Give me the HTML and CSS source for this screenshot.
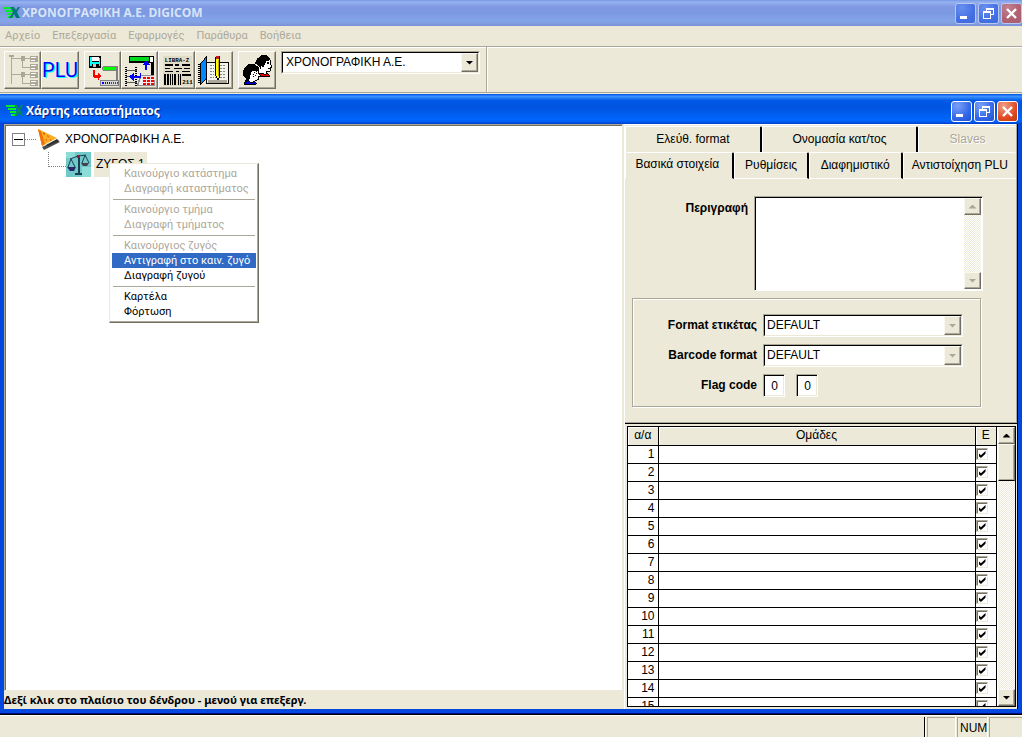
FILE: index.html
```html
<!DOCTYPE html>
<html lang="el">
<head>
<meta charset="utf-8">
<title>ΧΡΟΝΟΓΡΑΦΙΚΗ Α.Ε. DIGICOM</title>
<link rel="stylesheet" href="styles.css">
</head>
<body>
<header class="titlebar titlebar-app">
  <svg class="logo" viewBox="0 0 17 14"><path d="M0 1h9v2H0zM2 4h8v2H2zM4 7h6v2H4zM5 10h6v2H5z" fill="#00f020"/><path d="M7 1h4l2 3 2-3h2l-3 5 3 6h-4l-2-4-2 4H6l4-6z" fill="#007878"/></svg>
  <h1 class="title">ΧΡΟΝΟΓΡΑΦΙΚΗ Α.Ε. DIGICOM</h1>
  <div class="caption">
    <button class="cap" aria-label="Minimize"><svg viewBox="0 0 19 19"><path d="M4 12h7v3H4z" fill="#fff"/></svg></button>
    <button class="cap" aria-label="Restore"><svg viewBox="0 0 19 19" shape-rendering="crispEdges"><path d="M7 4h8v2H7zM7 4h1v3H7zM14 4h1v7h-1zM12 10h3v1h-3zM4 7h8v2H4zM4 7h1v8H4zM11 7h1v8h-1zM4 14h8v1H4z" fill="#fff"/></svg></button>
    <button class="cap cap-close" aria-label="Close"><svg viewBox="0 0 19 19"><path d="M5 5l9 9M14 5l-9 9" stroke="#fff" stroke-width="2.400"/></svg></button>
  </div>
</header>
<nav class="menubar">
  <button>Αρχείο</button><button>Επεξεργασία</button><button>Εφαρμογές</button><button>Παράθυρα</button><button>Βοήθεια</button>
</nav>
<div class="toolbar">
  <div class="toolband">
    <div class="toolgroup">
      <button class="tool" aria-label="Χάρτης"><svg viewBox="0 0 36 36" shape-rendering="crispEdges"><path d="M4 3h5v2H4zM16 4h5v5h-5zM16 20h5v5h-5z" fill="#aca899"/><path d="M6.500 5v27M6 6.500h10M6 22.500h10M18.500 9v7M21 6.500h6M18 15.500h9M18.500 25v7M21 22.500h6M18 31.500h9" stroke="#aca899" fill="none"/><path d="M26 4h8v6h-8zM26 12h8v6h-8zM26 20h8v6h-8zM26 28h8v6h-8z" fill="#aca899"/><path d="M27 5h5v1h-5zM27 13h5v1h-5zM27 21h5v1h-5zM27 29h5v1h-5zM27 8h4v1h-4zM27 16h4v1h-4zM27 24h4v1h-4zM27 32h4v1h-4z" fill="#fff"/></svg></button>
      <button class="tool tool-plu">PLU</button>
    </div>
    <div class="toolgroup">
      <button class="tool" aria-label="Αποστολή"><svg viewBox="0 0 36 36" shape-rendering="crispEdges"><path d="M4 4h12v12H5l-1-1z" fill="#000"/><path d="M5 5h2v9H5zM14 6h1v8h-1z" fill="#0ff"/><path d="M7 5h7v4H7z" fill="#fff"/><path d="M5 10h10v2H5z" fill="#0ff"/><path d="M8 12h5v3H8z" fill="#c0c0c0"/><path d="M11 12h2v3h-2z" fill="#000"/><path d="M8 18h2v5h3v-3l4 4-4 5v-3h-3l-2-2z" fill="#f00"/><path d="M18.500 14.500h14v4h-14z" fill="#0f0" stroke="#808080"/><path d="M32 14h2v14h-2zM15 28h20v6H15z" fill="#808080"/><path d="M16 29h18v4H16z" fill="#d8d8d8"/><path d="M17 31h9" stroke="#00f" stroke-width="2" stroke-dasharray="1 1"/><path d="M27 31h7" stroke="#f00" stroke-width="2" stroke-dasharray="1 1"/></svg></button>
      <button class="tool" aria-label="Λήψη"><svg viewBox="0 0 36 36" shape-rendering="crispEdges"><path d="M7 4h26v20h-3V11H8l-1-2z" fill="#000"/><path d="M8 5h20v4H8z" fill="#00d820"/><path d="M29 5h3v5h-3z" fill="#fff"/><path d="M19 23h14l1 11H15z" fill="#909090"/><path d="M20 24h13v9H17z" fill="#eee"/><path d="M22 25h3v2h-3zM26 25h3v2h-3zM30 25h3v2h-3zM22 28h3v2h-3zM26 28h3v2h-3zM30 28h3v2h-3zM22 31h3v2h-3zM26 31h3v2h-3zM30 31h3v2h-3z" fill="#f00"/><path d="M4.500 15v19M14.500 15v19" stroke="#000" stroke-width="2" stroke-dasharray="1 1"/><path d="M4 18.500h11M4 24.500h11M4 30.500h11" stroke="#555"/><path d="M7 25l5-4v3h6v-3h2v5h-8v3zM24 18v-5h-3l4-5 4 5h-3v5z" fill="#00f"/></svg></button>
      <button class="tool" aria-label="LIBRA-Z 211"><svg viewBox="0 0 36 36" shape-rendering="crispEdges"><path d="M4 4h30v30H4z" fill="#e0dcc8"/><text class="tiny" x="6" y="10">LIBRA-Z</text><path d="M6 12h8v2H6zM16 12h5v2h-5zM24 12h8v2h-8zM6 16h5v1H6zM15 16h9v1h-9zM26 16h6v1h-6zM6 19h8v1H6zM17 19h4v1h-4zM24 19h8v1h-8z" fill="#000"/><path d="M5 22h2v11H5zM8 22h2v11H8zM11 22h1v11h-1zM13 22h1v11h-1zM15 22h2v11h-2zM18 22h1v11h-1zM20 22h1v11h-1zM22 22h1v11h-1zM24 22h9v2h-9z" fill="#000"/><text class="tiny" x="24" y="32">211</text></svg></button>
      <button class="tool" aria-label="Σημειώσεις"><svg viewBox="0 0 36 36" shape-rendering="crispEdges"><path d="M11 10h10l1 2 1-2h10v22H11z" fill="#f4f4ec" stroke="#000"/><path d="M14 13.500h7M25 13.500h6M14 16.500h7M25 16.500h6M14 19.500h7M25 19.500h6M14 22.500h7M25 22.500h6M14 25.500h7M25 25.500h6" stroke="#808080" stroke-dasharray="2 1"/><path d="M12 28h20v3H12z" fill="#aca899"/><path d="M5 11l6-7v22l-6 7z" fill="#08f" stroke="#000"/><path d="M4 12v20" stroke="#000" stroke-width="3" stroke-dasharray="1 1"/><path d="M20.500 4.500h4v20l-2 4-2-4z" fill="#ff0" stroke="#000"/><path d="M21 4h3v3h-3z" fill="#c02020"/><path d="M23.500 8v16" stroke="#c0a800"/></svg></button>
    </div>
    <button class="tool" aria-label="Χρήστες"><svg viewBox="0 0 36 36" shape-rendering="crispEdges"><path d="M23 9l3-4h4l2 3v4l2 3-2 1v3l-4 1v3h-9v-8z" fill="#fff" stroke="#000"/><path d="M16 11l3-5 4-3h6l3 3v2l-4 1-2 4-1 3-2-2-1 3-2-4z" fill="#000"/><path d="M29 10h2v2h-2zM30 16h2v1h-2z" fill="#000"/><path d="M20 22l5-1 2 2 2-2 3 3-1 1H19z" fill="#e00000" stroke="#000"/><path d="M11 19h9v2l2 3-2 1v3l-4 1v2h-6z" fill="#fff" stroke="#000"/><path d="M15 19h1M17 20h1M15 21h1M17 22h1M14 23h1M16 24h1M14 25h1" stroke="#000"/><path d="M6 15l4-3h6l4 3 1 4h-5l-2-1-2 4-1 5-1 3H6l1-3-3-4v-4z" fill="#000"/><path d="M6 30l4-1 2 2 4-1 2 2-2 1H6z" fill="#00c" stroke="#000"/></svg></button>
    <div class="combo combo-store">
      <select aria-label="Κατάστημα"><option>ΧΡΟΝΟΓΡΑΦΙΚΗ Α.Ε.</option></select><span class="arrowbox"><i class="down"></i></span>
    </div>
  </div>
</div>

<main class="child">
  <header class="titlebar titlebar-child">
    <svg class="logo" viewBox="0 0 17 14"><path d="M0 1h9v2H0zM2 4h8v2H2zM4 7h6v2H4zM5 10h6v2H5z" fill="#00f020"/><path d="M9 1h2l2 4 2-4h2l-3 5 3 6h-2l-2-4-2 4H9l2-6z" fill="#009048"/></svg>
    <h2 class="title">Χάρτης καταστήματος</h2>
    <div class="caption">
      <button class="cap" aria-label="Minimize"><svg viewBox="0 0 19 19"><path d="M4 12h7v3H4z" fill="#fff"/></svg></button>
      <button class="cap" aria-label="Restore"><svg viewBox="0 0 19 19" shape-rendering="crispEdges"><path d="M7 4h8v2H7zM7 4h1v3H7zM14 4h1v7h-1zM12 10h3v1h-3zM4 7h8v2H4zM4 7h1v8H4zM11 7h1v8h-1zM4 14h8v1H4z" fill="#fff"/></svg></button>
      <button class="cap cap-close" aria-label="Close"><svg viewBox="0 0 19 19"><path d="M5 5l9 9M14 5l-9 9" stroke="#fff" stroke-width="2.400"/></svg></button>
    </div>
  </header>
  <div class="content">
    <section class="left">
      <div class="tree">
        <div class="node">
          <button class="expander" aria-label="Σύμπτυξη"></button><span class="dots"></span>
          <svg class="cone" viewBox="0 0 24 24"><path d="M5 19l15-7 3 2-16 8z" fill="#000" opacity=".7"/><path d="M1 1l19 9-15 8z" fill="#f8b020"/><path d="M1 1l4 17 3-2-4-13z" fill="#f07010"/><path d="M6 4l2 1v2l-2-1zM10 7l2 1-1 2zM8 12l2-1v2zM13 11l2 1-2 1z" fill="#e06010"/><path d="M9 17l11-6 2 2-11 5z" fill="#303030"/></svg>
          <span class="label">ΧΡΟΝΟΓΡΑΦΙΚΗ Α.Ε.</span>
        </div>
        <div class="node node-child">
          <span class="elbow"></span>
          <svg class="scale" viewBox="0 0 25 25"><path d="M0 0h25v25H0z" fill="#70c8c8"/><path d="M0 0h9v6H0zM16 15h9v10h-9z" fill="#8cdcd8"/><path d="M4 7l8-3 8-1M5 7l-3 8M5 7l4 8M19 3l-3 8M19 3l4 8" stroke="#184050" fill="none"/><path d="M12 3h2v19h-2zM9 21h7v2H9z" fill="#184050"/><path d="M1 15h9l-2 4H4z" fill="#282868"/><path d="M15 11h8l-2 3h-4z" fill="#484050"/><path d="M11 3h3v3h-3z" fill="#902038"/></svg>
          <span class="label label-selected">ΖΥΓΟΣ 1</span>
        </div>
        <div class="menu" role="menu">
          <button role="menuitem" disabled>Καινούργιο κατάστημα</button>
          <button role="menuitem" disabled>Διαγραφή καταστήματος</button>
          <hr>
          <button role="menuitem" disabled>Καινούργιο τμήμα</button>
          <button role="menuitem" disabled>Διαγραφή τμήματος</button>
          <hr>
          <button role="menuitem" disabled>Καινούργιος ζυγός</button>
          <button role="menuitem" class="active">Αντιγραφή στο καιν. ζυγό</button>
          <button role="menuitem">Διαγραφή ζυγού</button>
          <hr>
          <button role="menuitem">Καρτέλα</button>
          <button role="menuitem">Φόρτωση</button>
        </div>
      </div>
      <p class="hint">Δεξί κλικ στο πλαίσιο του δένδρου - μενού για επεξεργ.</p>
    </section>

    <section class="right">
      <div class="panel">
        <div class="tabs tabs-back" role="tablist">
          <button role="tab">Ελεύθ. format</button><button role="tab">Ονομασία κατ/τος</button><button role="tab" disabled>Slaves</button>
        </div>
        <div class="tabs tabs-front" role="tablist">
          <button role="tab" class="current">Βασικά στοιχεία</button><button role="tab">Ρυθμίσεις</button><button role="tab">Διαφημιστικό</button><button role="tab">Αντιστοίχηση PLU</button>
        </div>
        <form class="form">
          <div class="desc">
            <label for="desc">Περιγραφή</label>
            <div class="memo">
              <textarea id="desc"></textarea>
              <div class="scroll"><button type="button" aria-label="Πάνω"><i class="up dim"></i></button><span class="track"></span><button type="button" aria-label="Κάτω"><i class="down dim"></i></button></div>
            </div>
          </div>
          <div class="group">
            <label for="f1">Format ετικέτας</label>
            <div class="combo"><select id="f1"><option>DEFAULT</option></select><span class="arrowbox"><i class="down dim"></i></span></div>
            <label for="f2">Barcode format</label>
            <div class="combo"><select id="f2"><option>DEFAULT</option></select><span class="arrowbox"><i class="down dim"></i></span></div>
            <label for="f3">Flag code</label>
            <div class="flags"><input id="f3" value="0"><input aria-label="Flag code 2" value="0"></div>
          </div>
        </form>
      </div>
      <div class="gridbox">
        <div class="rows">
          <table>
            <thead><tr><th class="num">α/α</th><th>Ομάδες</th><th class="chk">E</th></tr></thead>
            <tbody>
              <tr><td>1</td><td></td><td><input type="checkbox" checked aria-label="1"></td></tr>
              <tr><td>2</td><td></td><td><input type="checkbox" checked aria-label="2"></td></tr>
              <tr><td>3</td><td></td><td><input type="checkbox" checked aria-label="3"></td></tr>
              <tr><td>4</td><td></td><td><input type="checkbox" checked aria-label="4"></td></tr>
              <tr><td>5</td><td></td><td><input type="checkbox" checked aria-label="5"></td></tr>
              <tr><td>6</td><td></td><td><input type="checkbox" checked aria-label="6"></td></tr>
              <tr><td>7</td><td></td><td><input type="checkbox" checked aria-label="7"></td></tr>
              <tr><td>8</td><td></td><td><input type="checkbox" checked aria-label="8"></td></tr>
              <tr><td>9</td><td></td><td><input type="checkbox" checked aria-label="9"></td></tr>
              <tr><td>10</td><td></td><td><input type="checkbox" checked aria-label="10"></td></tr>
              <tr><td>11</td><td></td><td><input type="checkbox" checked aria-label="11"></td></tr>
              <tr><td>12</td><td></td><td><input type="checkbox" checked aria-label="12"></td></tr>
              <tr><td>13</td><td></td><td><input type="checkbox" checked aria-label="13"></td></tr>
              <tr><td>14</td><td></td><td><input type="checkbox" checked aria-label="14"></td></tr>
              <tr><td>15</td><td></td><td><input type="checkbox" checked aria-label="15"></td></tr>
            </tbody>
          </table>
        </div>
        <div class="scroll"><button aria-label="Πάνω"><i class="up"></i></button><span class="thumb"></span><span class="track"></span><button aria-label="Κάτω"><i class="down"></i></button></div>
      </div>
    </section>
  </div>
</main>
<footer class="status"><span class="cell cell-main"></span><span class="cell"></span><span class="cell">NUM</span><span class="cell"></span></footer>
</body>
</html>
```
FILE: styles.css
```css
:root {
  --face: #ece9d8;
  --shade: #aca899;
  --dark: #716f64;
  --ui: "Liberation Sans", Arial, sans-serif;
  --menu: Roboto, Tahoma, sans-serif;
}
* { box-sizing: border-box; }
body {
  margin: 0;
  height: 100vh;
  display: flex;
  flex-direction: column;
  background: var(--face);
  font: 12px/15px var(--ui);
  color: #000;
  overflow: hidden;
}
button, select, input, textarea { font: inherit; color: inherit; margin: 0; padding: 0; border: 0; border-radius: 0; }
h1, h2, p { margin: 0; }

.titlebar { display: flex; align-items: center; flex: none; }
.titlebar-app {
  height: 26px;
  padding-left: 3px;
  color: #d8e4f8;
  background: linear-gradient(#7697e7, #96b2ee 8%, #809ae3 25%, #7b99e1 50%, #85a5e9 80%, #829edf 90%, #7a8fd4);
}
.titlebar-child {
  height: 30px;
  padding: 4px 0 0 2px;
  color: #fff;
  background: linear-gradient(#0050e8, #3c93ff 8%, #0058e6 22%, #0054e0 45%, #0066fc 85%, #005cf2 93%, #003cc8);
}
.logo { width: 17px; height: 14px; flex: none; }
.title { flex: 1; font: bold 12px/18px "Open Sans", "Trebuchet MS", sans-serif; padding-left: 2px; }
.titlebar-child .title { padding-left: 3px; text-shadow: 1px 1px #0a1883; }
.caption { display: flex; gap: 2px; }
.cap {
  width: 21px; height: 21px;
  border: 1px solid #fff;
  border-radius: 3px;
  background: radial-gradient(circle at 30% 20%, #7aa0f8, #3468e8 60%, #2050d0);
}
.cap svg { display: block; width: 19px; height: 19px; }
.cap-close { background: radial-gradient(circle at 30% 20%, #f0a088, #e04c24 60%, #c03810); }
.titlebar-app .cap { border-color: #b8c8f0; background: radial-gradient(circle at 30% 20%, #6890f0, #4470e4 60%, #4068d8); }
.titlebar-app .cap-close { background: radial-gradient(circle at 30% 20%, #c08090, #b06070 60%, #a86070); }

.menubar { display: flex; gap: 12px; height: 20px; padding-left: 5px; flex: none; font: 11px/18px var(--menu); }
.menubar button { background: none; color: var(--shade); }

.toolbar { flex: none; height: 47px; border-top: 1px solid var(--shade); border-bottom: 1px solid var(--shade); box-shadow: inset 0 1px #fff; display: flex; }
.toolband { display: flex; align-items: flex-start; gap: 5px; padding: 4px 6px 0 4px; border-right: 1px solid var(--shade); box-shadow: 1px 0 #fff; }
.toolgroup { display: flex; }
.tool {
  width: 37px; height: 38px;
  background: var(--face);
  border: 1px solid;
  border-color: #fff var(--dark) var(--dark) #fff;
  box-shadow: inset -1px -1px var(--shade);
}
.tool:last-child, .toolband > .tool { width: 38px; }
.tool svg { display: block; width: 35px; height: 36px; }
.tool-plu { font: 20px/34px Roboto, sans-serif; color: #00f; text-shadow: 1px 1px #0ff; }
.tiny { font: bold 6px "Liberation Mono", monospace; }

.combo {
  position: relative;
  height: 23px;
  border: 1px solid;
  border-color: var(--shade) #fff #fff var(--shade);
}
.combo-store { width: 199px; }
.combo select {
  display: block; width: 100%; height: 21px;
  appearance: none;
  padding-left: 3px;
  background: #fff;
  border: 1px solid;
  border-color: #000 var(--face) var(--face) #000;
}
.arrowbox, .scroll button, .thumb {
  display: grid; place-items: center;
  background: var(--face);
  border: 1px solid;
  border-color: #f8f7f0 var(--dark) var(--dark) #f8f7f0;
  box-shadow: inset -1px -1px var(--shade);
}
.arrowbox { position: absolute; top: 1px; right: 1px; bottom: 1px; width: 17px; pointer-events: none; }
.down, .up { display: block; width: 8px; height: 4px; background: #000; clip-path: polygon(0 0, 100% 0, 50% 100%); }
.up { clip-path: polygon(50% 0, 100% 100%, 0 100%); }
.dim { background: var(--shade); }

.child {
  flex: 1; min-height: 0;
  display: flex; flex-direction: column;
  margin-top: 1px;
  background: #0048e0;
  padding: 0 4px 4px;
  border-bottom: 1px solid #000c80;
}
.titlebar-child { margin: 0 -4px; padding-left: 6px; padding-right: 4px; }
.content { flex: 1; min-height: 0; display: grid; grid-template-columns: minmax(0, 620fr) minmax(380px, 394fr); background: var(--face); }
.left { display: flex; flex-direction: column; min-height: 0; }
.tree {
  position: relative;
  flex: 1;
  background: #fff;
  border: 1px solid;
  border-color: var(--shade) var(--face) var(--face) var(--shade);
  box-shadow: inset 1px 1px var(--dark);
  padding: 2px 7px;
  margin-right: 1px;
}
.node { display: flex; align-items: center; height: 25px; }
.expander { width: 13px; height: 13px; background: linear-gradient(#000, #000) center / 9px 1px no-repeat #fff; border: 1px solid #808080; }
.dots { width: 11px; border-top: 1px dotted #808080; }
.cone { width: 24px; height: 24px; margin-left: 1px; }
.scale { width: 25px; height: 25px; }
.label { padding: 0 2px; margin-left: 2px; line-height: 25px; }
.label-selected { background: var(--face); margin-left: 3px; }
.elbow { align-self: flex-start; width: 18px; height: 15px; margin-left: 36px; border: 1px dotted #808080; border-width: 0 0 1px 1px; }
.menu {
  position: absolute; left: 104px; top: 38px;
  width: 150px;
  padding: 2px 2px 3px;
  background: #fff;
  border: 1px solid;
  border-color: var(--face) var(--dark) var(--dark) var(--face);
  box-shadow: inset -1px -1px var(--shade);
  font: 11px/15px var(--menu);
}
.menu button { display: block; width: 100%; height: 15px; text-align: left; padding-left: 12px; background: none; white-space: nowrap; }
.menu button:disabled { color: var(--shade); }
.menu .active { background: #316ac5; color: #fff; }
.menu hr { margin: 3px 1px 2px; border: 0; border-top: 1px solid var(--shade); }
.hint { height: 18px; font: bold 11px/18px "Noto Sans", Tahoma, sans-serif; }

.right { display: flex; flex-direction: column; min-height: 0; border-left: 1px solid #fff; border-right: 1px solid #000; }
.panel { border-bottom: 1px solid #000; box-shadow: inset -1px -1px var(--shade), inset 0 1px #fff; padding: 2px 1px 16px 0; }
.tabs { display: flex; height: 26px; }
.tabs button { background: none; border-top: 1px solid #fff; border-left: 1px solid #fff; border-right: 2px solid #000; flex: 1 1 auto; white-space: nowrap; border-radius: 2px 2px 0 0; }
.tabs button:last-child { border-right: 0; }
.tabs button:disabled { color: var(--shade); text-shadow: 1px 1px #fff; }
.tabs-back button { flex: 0 0 40%; }
.tabs-back button:first-child { flex-basis: 35%; }
.tabs-back button:last-child { flex: 1; }
.tabs-front { height: 27px; }
.tabs-front button { flex: 0 0 24%; border-bottom: 1px solid #fff; }
.tabs-front button:nth-child(2) { flex-basis: 19%; }
.tabs-front button:last-child { flex: 1; }
.tabs-front .current { flex-basis: 28%; border-bottom-color: transparent; padding: 0 4px 2px 0; }

.form { padding: 17px 35px 0 7px; font-weight: bold; }
.form label { text-align: right; }
.desc { display: grid; grid-template-columns: 116px 1fr; gap: 6px; margin-right: -2px; }
.desc label { padding-top: 5px; }
.memo { display: flex; height: 95px; background: #fff; border: 1px solid; border-color: var(--shade) #fff #fff var(--shade); box-shadow: inset 1px 1px #000; padding: 1px; }
.memo textarea { flex: 1; min-width: 0; resize: none; background: none; }
.scroll { display: flex; flex-direction: column; width: 17px; flex: none; }
.scroll button { height: 17px; }
.track { flex: 1; background: repeating-conic-gradient(#fff 0 25%, var(--face) 0 50%) 0 0 / 2px 2px; }
.group {
  display: grid; grid-template-columns: 124px 1fr; gap: 7px 6px; align-items: center;
  margin-top: 7px; padding: 15px 18px 9px 0;
  border: 1px solid var(--shade);
  box-shadow: inset 1px 1px #fff, 1px 1px #fff;
}
.group .combo { margin-right: -1px; }
.group select { padding-left: 2px; }
.group select, .flags input { font-weight: normal; }
.flags { display: flex; gap: 11px; }
.flags input { width: 22px; height: 23px; padding-right: 6px; text-align: right; background: #fff; border: 1px solid; border-color: var(--shade) #fff #fff var(--shade); box-shadow: inset 1px 1px #000, inset -1px -1px var(--face); }

.gridbox { flex: 1; min-height: 0; display: flex; margin: 2px 1px 2px 2px; border: 1px solid #000; gap: 1px; background: #fff; overflow: hidden; }
.rows { flex: 1; overflow: hidden; border-right: 1px solid #000; }
table { width: 100%; border-collapse: collapse; table-layout: fixed; }
th, td { height: 18px; padding: 0; border-bottom: 1px solid #000; border-right: 1px solid #000; }
tr > :last-child { border-right: 0; }
th { background: var(--face); font-weight: normal; box-shadow: inset 1px 1px #fff; }
.num { width: 30px; }
.chk { width: 21px; }
td:first-child { text-align: right; padding-right: 3px; }
td input {
  appearance: none; display: block; width: 12px; height: 12px;
  border: 1px solid; border-color: var(--shade) var(--face) var(--face) var(--shade);
  box-shadow: inset 1px 1px var(--dark);
}
td input:checked::after { content: ""; display: block; width: 7px; height: 7px; margin: 2px; background: #000; clip-path: polygon(0 30%, 35% 62%, 100% 0, 100% 40%, 35% 100%, 0 70%); }
.thumb { height: 37px; border-bottom-color: #000; }

.status { flex: none; height: 23px; display: flex; gap: 2px; padding-top: 2px; border-top: 1px solid #000; box-shadow: inset 0 1px #fff; }
.cell { width: 28px; padding-left: 2px; line-height: 20px; border: 1px solid var(--shade); border-width: 1px 0 0 1px; box-shadow: 1px 0 #fff; }
.cell:nth-child(3) { width: 30px; }
.cell:last-child { width: 33px; }
.cell-main { flex: 1; border: 0; border-right: 1px solid #000; }
```
